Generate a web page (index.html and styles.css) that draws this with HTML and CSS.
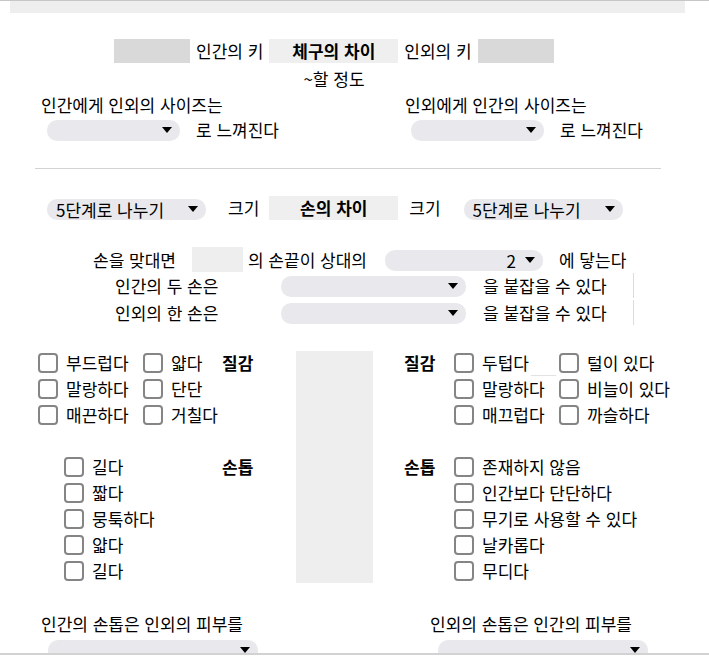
FILE: index.html
```html
<!DOCTYPE html>
<html lang="ko">
<head>
    <meta charset="UTF-8">
    <meta name="viewport" content="width=device-width, initial-scale=1.0">
    <title>체구의 차이</title>

    <link rel="stylesheet" href="styles.css">
</head>
<body>

<div class="page">
    <div class="topbar"></div>

    <!-- 체구의 차이 -->
    <div class="size-compare">
        <div class="compare-row">
            <span class="blank-box"></span>
            <span>인간의 키</span>
            <span class="title-box">체구의 차이</span>
            <span>인외의 키</span>
            <span class="blank-box"></span>
        </div>
        <div class="degree">~할 정도</div>
    </div>

    <div class="feel">
        <div class="feel-col">
            <div class="feel-label">인간에게 인외의 사이즈는</div>
            <div class="feel-pick">
                <span class="pick pick-feel"><select><option></option></select></span>
                <span class="feel-text">로 느껴진다</span>
            </div>
        </div>
        <div class="feel-col">
            <div class="feel-label">인외에게 인간의 사이즈는</div>
            <div class="feel-pick">
                <span class="pick pick-feel"><select><option></option></select></span>
                <span class="feel-text">로 느껴진다</span>
            </div>
        </div>
    </div>

    <hr class="divider">

    <!-- 손의 차이 -->
    <div class="hand-row">
        <span class="pick pick-step"><select><option>5단계로 나누기</option></select></span>
        <span class="size-word">크기</span>
        <span class="title-box">손의 차이</span>
        <span class="size-word size-word-right">크기</span>
        <span class="pick pick-step"><select><option>5단계로 나누기</option></select></span>
    </div>

    <div class="touch-row">
        <span>손을 맞대면</span>
        <span class="finger-box"></span>
        <span class="touch-text">의 손끝이 상대의</span>
        <span class="pick pick-reach"><select><option>2</option></select></span>
        <span class="touch-end">에 닿는다</span>
    </div>

    <div class="grip-row">
        <span class="grip-label">인간의 두 손은</span>
        <span class="pick pick-grip"><select><option></option></select></span>
        <span class="grip-text">을 붙잡을 수 있다</span>
    </div>
    <div class="grip-row">
        <span class="grip-label">인외의 한 손은</span>
        <span class="pick pick-grip"><select><option></option></select></span>
        <span class="grip-text">을 붙잡을 수 있다</span>
    </div>

    <!-- 질감 / 손톱 -->
    <div class="traits">
        <div class="trait-left">
            <div class="texture-left">
                <span class="trait-title">질감</span>
                <label class="check"><input type="checkbox"><span>부드럽다</span></label>
                <label class="check"><input type="checkbox"><span>얇다</span></label>
                <label class="check"><input type="checkbox"><span>말랑하다</span></label>
                <label class="check"><input type="checkbox"><span>단단</span></label>
                <label class="check"><input type="checkbox"><span>매끈하다</span></label>
                <label class="check"><input type="checkbox"><span>거칠다</span></label>
            </div>
            <div class="nail-left">
                <span class="trait-title">손톱</span>
                <label class="check"><input type="checkbox"><span>길다</span></label>
                <label class="check"><input type="checkbox"><span>짧다</span></label>
                <label class="check"><input type="checkbox"><span>뭉툭하다</span></label>
                <label class="check"><input type="checkbox"><span>얇다</span></label>
                <label class="check"><input type="checkbox"><span>길다</span></label>
            </div>
        </div>

        <div class="trait-panel"></div>

        <div class="trait-right">
            <div class="texture-right">
                <span class="trait-title">질감</span>
                <label class="check"><input type="checkbox"><span>두텁다</span><span class="fill-line"></span></label>
                <label class="check"><input type="checkbox"><span>털이 있다</span></label>
                <label class="check"><input type="checkbox"><span>말랑하다</span></label>
                <label class="check"><input type="checkbox"><span>비늘이 있다</span></label>
                <label class="check"><input type="checkbox"><span>매끄럽다</span></label>
                <label class="check"><input type="checkbox"><span>까슬하다</span></label>
            </div>
            <div class="nail-right">
                <span class="trait-title">손톱</span>
                <label class="check"><input type="checkbox"><span>존재하지 않음</span></label>
                <label class="check"><input type="checkbox"><span>인간보다 단단하다</span></label>
                <label class="check"><input type="checkbox"><span>무기로 사용할 수 있다</span></label>
                <label class="check"><input type="checkbox"><span>날카롭다</span></label>
                <label class="check"><input type="checkbox"><span>무디다</span></label>
            </div>
        </div>
    </div>

    <div class="nail-skin">
        <div class="skin-col">
            <div class="skin-label">인간의 손톱은 인외의 피부를</div>
            <span class="pick pick-skin"><select><option></option></select></span>
        </div>
        <div class="skin-col skin-col-right">
            <div class="skin-label">인외의 손톱은 인간의 피부를</div>
            <span class="pick pick-skin"><select><option></option></select></span>
        </div>
    </div>
</div>

</body>
</html>
```

FILE: styles.css
```css
body {
    margin: 0;
    background: #fff;
    color: #000;
    font-family: "Noto Sans CJK KR", "Noto Sans", sans-serif;
    font-size: 17px;
    line-height: 24px;
}

.page {
    height: 655px;
    box-sizing: border-box;
    border-top: 1px solid #c6c6c6;
    border-bottom: 2px solid #d2d2d2;
    overflow: hidden;
}

.topbar {
    height: 12px;
    margin: 0 24px 0 10px;
    background: #eeeeee;
}

/* Size compare */
.size-compare {
    width: 440px;
    margin: 26px 0 0 114px;
}

.compare-row {
    display: flex;
    align-items: center;
    gap: 6px;
    height: 24px;
}

.blank-box {
    width: 76px;
    height: 24px;
    background: #d9d9d9;
}

.title-box {
    width: 129px;
    height: 24px;
    background: #efefef;
    font-weight: bold;
    text-align: center;
}

.degree {
    margin-top: 4px;
    text-align: center;
}

.feel {
    display: flex;
    margin-top: 2px;
    padding-left: 41px;
}

.feel-col:first-child {
    width: 364px;
}

.feel-pick {
    display: flex;
    align-items: center;
    margin-top: 2px;
    height: 21px;
}

.feel-pick .pick {
    margin-left: 6px;
}

.feel-text {
    margin-left: 16px;
}

/* Select boxes */
.pick {
    position: relative;
    display: inline-block;
    height: 21px;
}

.pick select {
    appearance: none;
    -webkit-appearance: none;
    width: 100%;
    height: 21px;
    margin: 0;
    border: 0;
    border-radius: 10px;
    padding: 0 0 0 9px;
    background: #e9e9ed;
    color: #000;
    font-family: inherit;
    font-size: 17px;
    line-height: 21px;
}

.pick::after {
    content: "";
    position: absolute;
    right: 8px;
    top: 8px;
    border-left: 5px solid transparent;
    border-right: 5px solid transparent;
    border-top: 6px solid #000;
    pointer-events: none;
}

.pick-feel { width: 133px; }
.pick-step { width: 159px; }
.pick-reach { width: 158px; }
.pick-grip { width: 185px; }
.pick-skin { width: 210px; }

.pick-reach select {
    text-align: right;
    text-align-last: right;
    padding-right: 27px;
}

.divider {
    height: 0;
    border: 0;
    border-top: 1px solid #d3d3d3;
    margin: 28px 48px 0 35px;
}

/* Hand size */
.hand-row {
    display: flex;
    align-items: center;
    height: 24px;
    margin-top: 27px;
    padding-left: 47px;
}

.size-word {
    margin: 0 10px 0 22px;
}

.size-word-right {
    margin: 0 23px 0 11px;
}

.touch-row {
    display: flex;
    align-items: center;
    height: 25px;
    margin-top: 27px;
    padding-left: 93px;
}

.finger-box {
    width: 51px;
    height: 25px;
    margin-left: 16px;
    background: #eeeeee;
}

.touch-text {
    margin-left: 5px;
}

.touch-row .pick {
    margin-left: 18px;
}

.touch-end {
    margin-left: 16px;
}

.grip-row {
    display: flex;
    align-items: center;
    width: 519px;
    height: 25px;
    box-sizing: border-box;
    margin: 1px 0 0 115px;
    border-right: 1px solid #dcdcdc;
}

.grip-row + .grip-row {
    margin-top: 2px;
}

.grip-label {
    width: 166px;
}

.grip-text {
    margin-left: 17px;
}

/* Texture / nails */
.traits {
    display: flex;
    align-items: flex-start;
    margin-top: 25px;
}

.trait-left {
    width: 258px;
    padding-left: 38px;
}

.trait-panel {
    width: 77px;
    height: 232px;
    margin-top: 1px;
    background: #eeeeee;
}

.trait-right {
    margin-left: 31px;
}

.texture-left,
.texture-right,
.nail-left,
.nail-right {
    display: grid;
    grid-auto-rows: 26px;
}

.texture-left {
    grid-template-columns: 105px 79px auto;
}

.texture-left .trait-title {
    grid-column: 3;
    grid-row: 1 / span 3;
}

.nail-left {
    grid-template-columns: 158px auto;
    margin-top: 26px;
    padding-left: 26px;
}

.nail-left .trait-title {
    grid-column: 2;
    grid-row: 1 / span 5;
}

.texture-right {
    grid-template-columns: 50px 105px auto;
}

.nail-right {
    grid-template-columns: 50px auto;
    margin-top: 26px;
}

.texture-right .trait-title,
.nail-right .trait-title {
    grid-column: 1;
    grid-row: 1 / span 5;
}

.texture-right .trait-title {
    grid-row: 1 / span 3;
}

.trait-title {
    font-weight: bold;
    line-height: 26px;
    align-self: start;
}

.check {
    display: flex;
    align-items: center;
    gap: 8px;
    height: 26px;
    white-space: nowrap;
}

.check input {
    appearance: none;
    -webkit-appearance: none;
    width: 20px;
    height: 20px;
    margin: 0;
    box-sizing: border-box;
    border: 2px solid #858585;
    border-radius: 4px;
    background: #fff;
}

.fill-line {
    align-self: flex-end;
    width: 25px;
    height: 0;
    margin-left: -6px;
    border-bottom: 1px solid #e2e2e2;
}

/* Nail vs skin */
.nail-skin {
    display: flex;
    margin-top: 28px;
    padding-left: 41px;
}

.skin-col:first-child {
    width: 389px;
}

.skin-col .pick {
    margin: 3px 0 0 7px;
}

.skin-col-right .pick {
    margin-left: 8px;
}
```
